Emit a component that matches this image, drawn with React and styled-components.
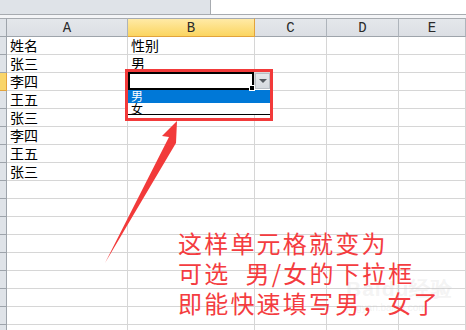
import React from 'react';
import styled, { createGlobalStyle } from 'styled-components';

const GlobalStyle = createGlobalStyle`
  html, body {
    margin: 0;
    padding: 0;
    background: #ffffff;
  }
  body {
    width: 466px;
    height: 330px;
    overflow: hidden;
    font-family: "Noto Sans CJK SC", "Noto Sans", sans-serif;
  }
`;

const Page = styled.div`
  position: relative;
  width: 466px;
  height: 330px;
  overflow: hidden;
  background: #fff;
`;

const FormulaBar = styled.div`
  display: flex;
  height: 15px;
  border-bottom: 1px solid #a7abb0;
  box-sizing: border-box;
`;

const NameArea = styled.div`
  width: 211px;
  background: #dfe3e8;
  border-right: 1px solid #a7abb0;
  box-sizing: border-box;
`;

const Spacer = styled.div`
  height: 3px;
  background: #f4f5f7;
`;

const Sheet = styled.div`
  display: grid;
  grid-template-columns: 7px 121px 127px 72px 72px 1fr;
  grid-template-rows: 19px;
  grid-auto-rows: 18px;
`;

const Corner = styled.div`
  background: #dfe3e8;
  border-top: 1px solid #a7abb0;
  border-right: 1px solid #9ea4ab;
  border-bottom: 1px solid #9ea4ab;
  box-sizing: border-box;
`;

const ColHead = styled.div`
  display: flex;
  align-items: center;
  justify-content: center;
  box-sizing: border-box;
  border-top: 1px solid #a7abb0;
  border-right: 1px solid ${p => (p.$active ? '#e2a33c' : '#aeb4bb')};
  border-bottom: 1px solid ${p => (p.$active ? '#e2a33c' : '#9ea4ab')};
  background: ${p =>
    p.$active
      ? 'linear-gradient(#ffeaa6, #fbd560)'
      : 'linear-gradient(#e4e7eb, #dcdfe4)'};
  font-family: "Liberation Mono", "DejaVu Sans Mono", monospace;
  font-size: 14px;
  color: #2a2a2a;
  padding-top: 1px;
`;

const RowHead = styled.div`
  box-sizing: border-box;
  background: ${p => (p.$active ? '#f9d56a' : '#dfe3e8')};
  border-right: 1px solid ${p => (p.$active ? '#e2a33c' : '#9ea4ab')};
  border-bottom: 1px solid ${p => (p.$active ? '#e2a33c' : '#9ea4ab')};
`;

const Cell = styled.div`
  box-sizing: border-box;
  border-right: 1px solid #d6d6d6;
  border-bottom: 1px solid #d6d6d6;
  font-size: 14px;
  line-height: 17px;
  padding-left: 3px;
  color: #000;
  white-space: nowrap;
`;

/* the in-cell dropdown: active cell, its button and the open list */
const Dropdown = styled.div`
  position: absolute;
  left: 128px;
  top: 72px;
  display: grid;
  grid-template-columns: 126px 16px;
  grid-template-rows: 18px auto;
`;

const ActiveCell = styled.div`
  position: relative;
  box-sizing: border-box;
  border: 2px solid #000;
  &::after {
    content: '';
    position: absolute;
    right: -3px;
    bottom: -3px;
    width: 4px;
    height: 4px;
    background: #000;
    border: 1px solid #fff;
  }
`;

const DropButton = styled.div`
  margin: 1px 0 1px 1px;
  box-sizing: border-box;
  background: linear-gradient(#e6e8eb, #d5d9de);
  border: 1px solid #b9bec4;
  display: flex;
  align-items: center;
  justify-content: center;
  &::before {
    content: '';
    width: 0;
    height: 0;
    border-left: 4px solid transparent;
    border-right: 4px solid transparent;
    border-top: 4px solid #555a60;
  }
`;

const List = styled.div`
  grid-column: 1 / span 2;
  display: flex;
  flex-direction: column;
  background: #fff;
  border-bottom: 1px solid #000;
`;

const Option = styled.div`
  height: ${p => p.$h}px;
  line-height: 12px;
  font-size: 12px;
  padding-left: 3px;
  background: ${p => (p.$selected ? '#0078d7' : '#fff')};
  color: ${p => (p.$selected ? '#fff' : '#000')};
`;

const Highlight = styled.div`
  position: absolute;
  left: 125px;
  top: 69px;
  width: 148px;
  height: 52px;
  box-sizing: border-box;
  border: 3px solid #f23a3a;
`;

const Arrow = styled.svg`
  position: absolute;
  left: 0;
  top: 0;
  pointer-events: none;
`;

const Note = styled.div`
  position: absolute;
  left: 178px;
  top: 228px;
  display: flex;
  flex-direction: column;
  font-size: 24px;
  line-height: 30px;
  letter-spacing: 2.2px;
  color: #f43c40;
  white-space: pre;
`;

const Watermark = styled.div`
  position: absolute;
  left: 346px;
  top: 278px;
  display: flex;
  flex-direction: column;
  color: rgba(185, 185, 190, 0.18);
  font-family: "Liberation Sans", Arial, sans-serif;
  line-height: 1;
`;

const MarkBig = styled.span`
  font-size: 21px;
  font-weight: bold;
  letter-spacing: 1px;
`;

const MarkSmall = styled.span`
  font-size: 10px;
  margin-top: 4px;
`;

const colA = ['姓名', '张三', '李四', '王五', '张三', '李四', '王五', '张三'];
const colB = ['性别', '男'];
const cols = ['A', 'B', 'C', 'D', 'E'];
const noteLines = ['这样单元格就变为', '可选  男/女的下拉框', '即能快速填写男，女了'];

export default function App() {
  const rows = Array.from({ length: 17 }, (_, i) => i);
  return (
    <Page>
      <GlobalStyle />
      <FormulaBar>
        <NameArea />
      </FormulaBar>
      <Spacer />
      <Sheet>
        <Corner />
        {cols.map(c => (
          <ColHead key={c} $active={c === 'B'}>{c}</ColHead>
        ))}
        {rows.map(r => (
          <React.Fragment key={r}>
            <RowHead $active={r === 2} />
            <Cell>{colA[r] || ''}</Cell>
            <Cell>{colB[r] || ''}</Cell>
            <Cell />
            <Cell />
            <Cell />
          </React.Fragment>
        ))}
      </Sheet>

      <Dropdown>
        <ActiveCell />
        <DropButton />
        <List>
          <Option $selected $h={13}>男</Option>
          <Option $h={11}>女</Option>
        </List>
      </Dropdown>
      <Highlight />

      <Arrow width="466" height="330" viewBox="0 0 466 330">
        <polygon
          points="178,120 162,136 169,137 105,263 176,143 177,121"
          fill="#f23a3a"
        />
      </Arrow>

      <Watermark>
        <MarkBig>Baidu经验</MarkBig>
        <MarkSmall>jingyan.baidu.com</MarkSmall>
      </Watermark>

      <Note>
        {noteLines.map(l => (
          <span key={l}>{l}</span>
        ))}
      </Note>
    </Page>
  );
}
